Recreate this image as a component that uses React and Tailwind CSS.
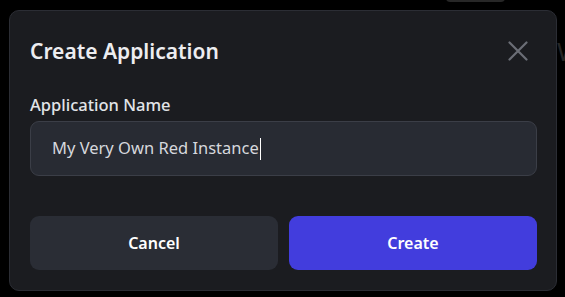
import React from 'react';

function CloseIcon() {
    return (
        <svg width="20" height="20" viewBox="0 0 20 20" fill="none" stroke="#6b6e76" strokeWidth="2.2" strokeLinecap="round">
            <path d="M1.5 1.5 L18.5 18.5 M18.5 1.5 L1.5 18.5" />
        </svg>
    );
}

export default function App() {
    return (
        <div
            className="relative w-[565px] h-[297px] overflow-hidden bg-black pt-[10px] pl-[9px]"
            style={{ fontFamily: '"Noto Sans", "Open Sans", sans-serif' }}
        >
            {/* bits of the page behind the backdrop */}
            <div className="absolute left-[446px] top-[-6px] w-[59px] h-[8px] rounded-[4px] bg-[#272727]" />
            <div className="absolute left-[557px] top-[38px] text-[26px] text-[#262626] leading-none">W</div>

            <div className="relative w-[548px] h-[281px] rounded-[10px] border border-[#2b2d34] bg-[#1b1c20] pl-[20px] pr-[19px] pt-[26px]">
                <div className="flex items-center justify-between h-[28px]">
                    <h2 className="text-[21px] leading-[28px] font-semibold text-[#ededf0]">Create Application</h2>
                    <button className="mr-[9px] flex items-center justify-center w-[20px] h-[20px]">
                        <CloseIcon />
                    </button>
                </div>

                <label className="block mt-[28px] text-[16.5px] leading-[24px] font-medium text-[#e2e4e8]">
                    Application Name
                </label>
                <div className="mt-[4px] h-[55px] rounded-[9px] border border-[#3b3e47] bg-[#282b33] flex items-center pl-[21px]">
                    <span className="text-[16.5px] text-[#d6d8dd]">My Very Own Red Instance</span>
                    <span className="ml-[1px] w-[1px] h-[22px] bg-white" />
                </div>

                <div className="mt-[40px] flex gap-[11px]">
                    <button className="flex-1 h-[54px] rounded-[9px] bg-[#2a2d35] text-[16px] font-semibold text-white">
                        Cancel
                    </button>
                    <button className="flex-1 h-[54px] rounded-[9px] bg-[#423ddd] text-[16px] font-semibold text-white">
                        Create
                    </button>
                </div>
            </div>
        </div>
    );
}
